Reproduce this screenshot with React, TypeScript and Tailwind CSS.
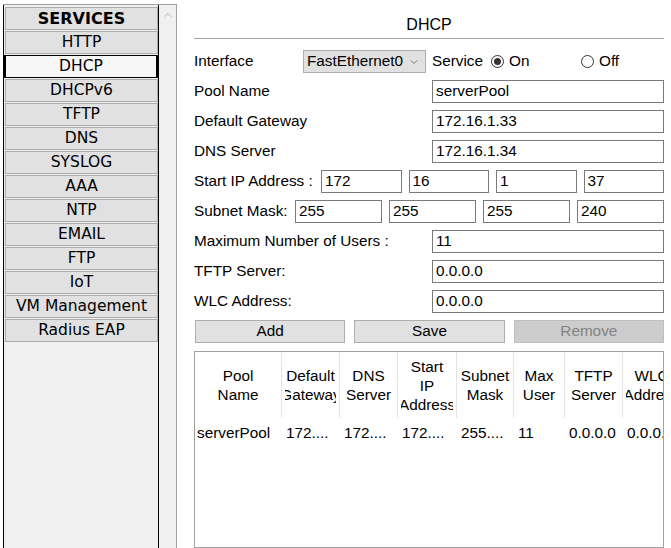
import { ChevronDown, ChevronUp } from "lucide-react";

const SERVICES = [
  "HTTP",
  "DHCP",
  "DHCPv6",
  "TFTP",
  "DNS",
  "SYSLOG",
  "AAA",
  "NTP",
  "EMAIL",
  "FTP",
  "IoT",
  "VM Management",
  "Radius EAP",
];

const COLUMNS = [
  { w: "w-[87px]", head: ["Pool", "Name"], value: "serverPool" },
  { w: "w-[58px]", head: ["Default", "Gateway"], value: "172...." },
  { w: "w-[58px]", head: ["DNS", "Server"], value: "172...." },
  { w: "w-[59px]", head: ["Start", "IP", "Address"], value: "172...." },
  { w: "w-[57px]", head: ["Subnet", "Mask"], value: "255...." },
  { w: "w-[51px]", head: ["Max", "User"], value: "11" },
  { w: "w-[58px]", head: ["TFTP", "Server"], value: "0.0.0.0" },
  { w: "w-[58px]", head: ["WLC", "Address"], value: "0.0.0.0" },
];

function Field({ value, className = "" }: { value: string; className?: string }) {
  return (
    <div
      className={`h-[23px] border border-[#7a7a7a] bg-white px-[3px] flex items-center text-black overflow-hidden whitespace-nowrap ${className}`}
    >
      {value}
    </div>
  );
}

function Radio({ checked }: { checked?: boolean }) {
  return (
    <span className="w-[13px] h-[13px] rounded-full border border-[#333] bg-white flex items-center justify-center shrink-0">
      {checked && <span className="w-[7px] h-[7px] rounded-full bg-[#333]" />}
    </span>
  );
}

function Row({ label, children, labelW = "w-[238px]" }: { label: string; labelW?: string; children: React.ReactNode }) {
  return (
    <div className="flex items-center h-[23px]">
      <div className={`${labelW} shrink-0 whitespace-nowrap`}>{label}</div>
      {children}
    </div>
  );
}

export default function App() {
  return (
    <div className="w-[671px] h-[548px] overflow-hidden bg-white flex font-['Liberation_Sans',Arial,sans-serif] text-black text-[15.3px]">
      {/* Services list */}
      <div className="ml-[3px] mt-[4px] flex h-[600px] border-t border-[#a0a0a0] shrink-0">
        <div className="w-[156px] border-x border-black bg-[#f0f0f0] pl-[1px] pt-[2px] flex flex-col gap-[1px] font-['DejaVu_Sans',sans-serif] text-[15.5px]">
          <div className="h-[23px] bg-[#e1e1e1] border border-[#adadad] flex items-center justify-center text-[16px] font-bold">
            SERVICES
          </div>
          {SERVICES.map((s) =>
            s === "DHCP" ? (
              <div
                key={s}
                className="h-[23px] -ml-[1px] bg-[#f7f7f7] border-x-2 border-y border-black flex items-center justify-center"
              >
                {s}
              </div>
            ) : (
              <div
                key={s}
                className="h-[23px] bg-[#e1e1e1] border border-[#adadad] flex items-center justify-center"
              >
                {s}
              </div>
            )
          )}
        </div>
        <div className="w-[18px] bg-[#f0f0f0] border-r border-[#a0a0a0] flex justify-center pt-[4px]">
          <ChevronUp size={12} strokeWidth={2} className="text-[#b5b5b5]" />
        </div>
      </div>

      {/* DHCP panel */}
      <div className="ml-[17px] mt-[3px] w-[470px] shrink-0 flex flex-col">
        <div className="h-[39px] border-b border-[#a0a0a0] pt-[13px] text-center text-[16px] leading-[18px]">
          DHCP
        </div>

        <div className="mt-[11px] flex flex-col gap-[7px]">
          <Row label="Interface" labelW="w-[109px]">
            <div className="w-[123px] h-[23px] bg-[#e1e1e1] border border-[#adadad] flex items-center pl-[3px] pr-[5px]">
              <span className="flex-1">FastEthernet0</span>
              <ChevronDown size={12} strokeWidth={1.5} className="text-[#555]" />
            </div>
            <div className="ml-[6px] w-[59px]">Service</div>
            <div className="w-[90px] flex items-center gap-[5px]">
              <Radio checked />
              <span>On</span>
            </div>
            <div className="flex items-center gap-[5px]">
              <Radio />
              <span>Off</span>
            </div>
          </Row>
          <Row label="Pool Name">
            <Field value="serverPool" className="flex-1" />
          </Row>
          <Row label="Default Gateway">
            <Field value="172.16.1.33" className="flex-1" />
          </Row>
          <Row label="DNS Server">
            <Field value="172.16.1.34" className="flex-1" />
          </Row>
          <Row label="Start IP Address :" labelW="w-[127px]">
            <div className="flex-1 flex gap-[7px]">
              <Field value="172" className="flex-1" />
              <Field value="16" className="flex-1" />
              <Field value="1" className="flex-1" />
              <Field value="37" className="flex-1" />
            </div>
          </Row>
          <Row label="Subnet Mask:" labelW="w-[101px]">
            <div className="flex-1 flex gap-[7px]">
              <Field value="255" className="flex-1" />
              <Field value="255" className="flex-1" />
              <Field value="255" className="flex-1" />
              <Field value="240" className="flex-1" />
            </div>
          </Row>
          <Row label="Maximum Number of Users :">
            <Field value="11" className="flex-1" />
          </Row>
          <Row label="TFTP Server:">
            <Field value="0.0.0.0" className="flex-1" />
          </Row>
          <Row label="WLC Address:">
            <Field value="0.0.0.0" className="flex-1" />
          </Row>
        </div>

        <div className="mt-[7px] ml-[1px] flex gap-[9px]">
          <div className="flex-1 h-[23px] bg-[#e1e1e1] border border-[#adadad] flex items-center justify-center">Add</div>
          <div className="flex-1 h-[23px] bg-[#e1e1e1] border border-[#adadad] flex items-center justify-center">Save</div>
          <div className="flex-1 h-[23px] bg-[#cccccc] border border-[#bfbfbf] text-[#838383] flex items-center justify-center">
            Remove
          </div>
        </div>

        <div className="mt-[8px] h-[220px] border border-[#a0a0a0] bg-white overflow-hidden">
          <div className="flex h-[66px]">
            {COLUMNS.map((c, i) => (
              <div key={i} className={`${c.w} shrink-0 border-r border-[#e4e4e4] px-[3px] flex`}>
                <div className="w-full overflow-hidden flex flex-col items-center justify-center leading-[19px]">
                  {c.head.map((h) => (
                    <span key={h} className="whitespace-nowrap">
                      {h}
                    </span>
                  ))}
                </div>
              </div>
            ))}
          </div>
          <div className="flex h-[30px] items-center">
            {COLUMNS.map((c, i) => (
              <div
                key={i}
                className={`${c.w} shrink-0 overflow-hidden whitespace-nowrap ${i === 0 ? "pl-[2px]" : "pl-[4px]"}`}
              >
                {c.value}
              </div>
            ))}
          </div>
        </div>
      </div>
    </div>
  );
}
